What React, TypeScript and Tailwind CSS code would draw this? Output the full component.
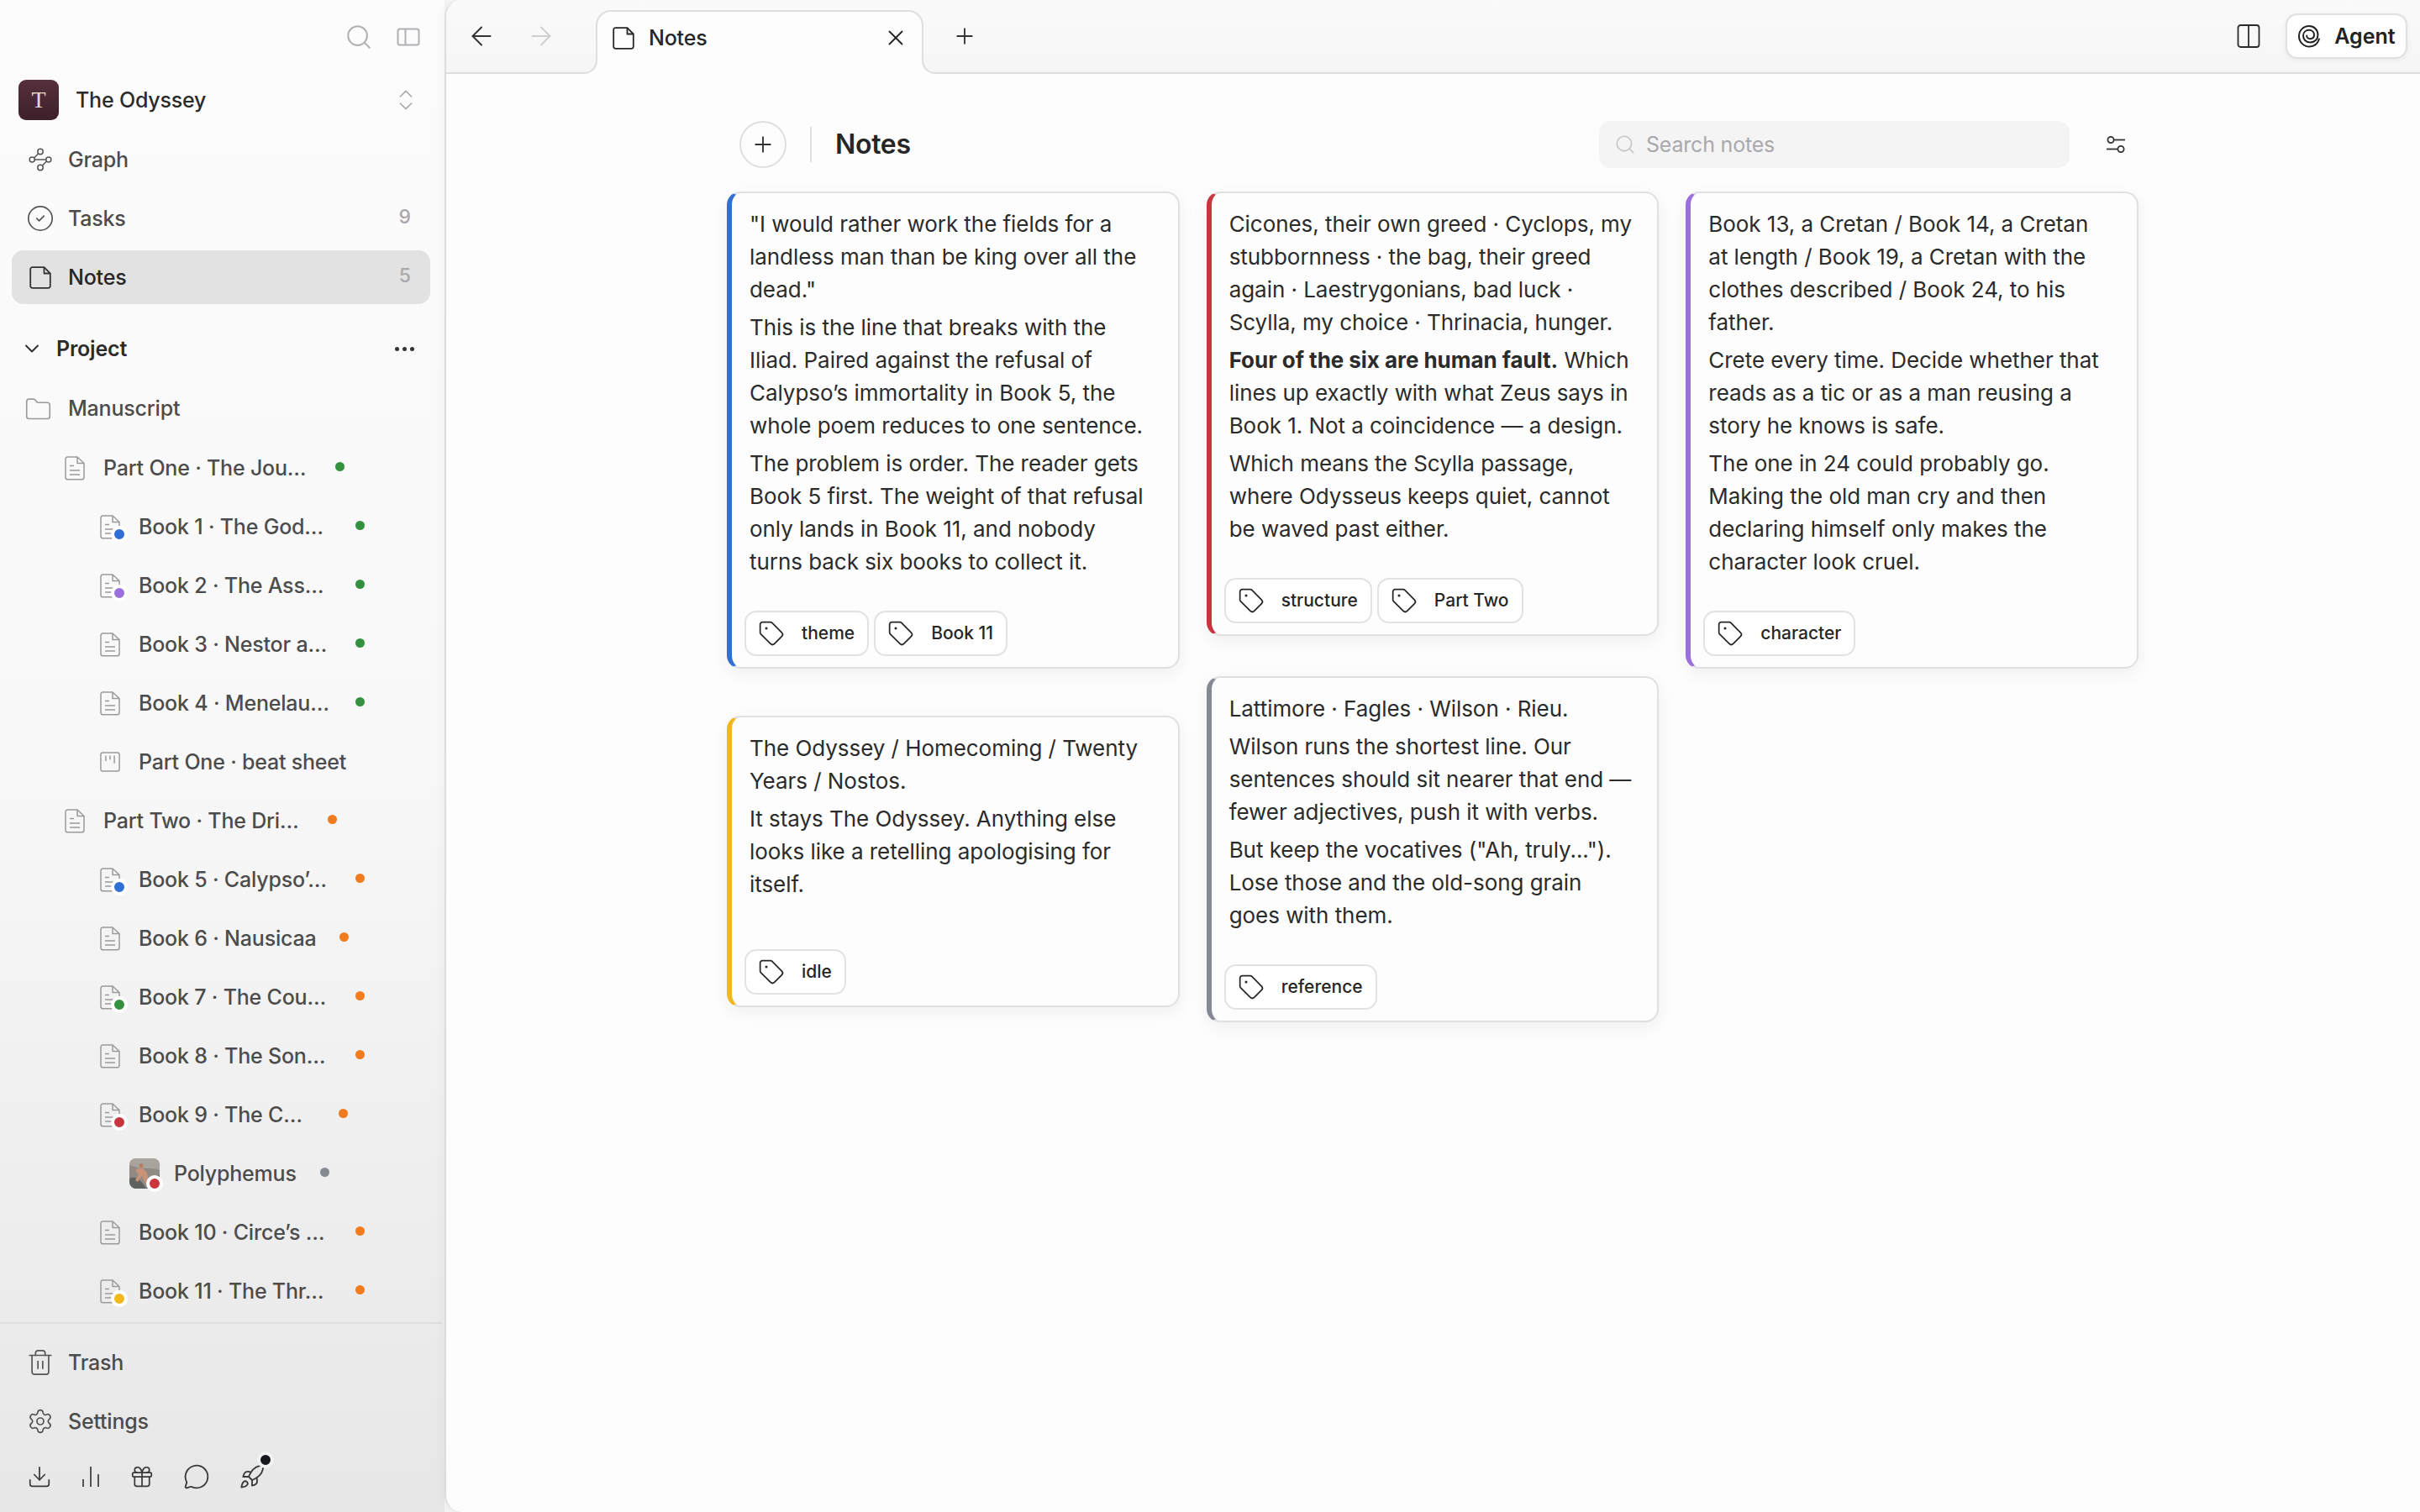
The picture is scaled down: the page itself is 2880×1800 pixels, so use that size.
import {
  ArrowLeft,
  ArrowRight,
  ChevronDown,
  ChevronsUpDown,
  CircleCheck,
  Download,
  Folder,
  Gift,
  MessageCircle,
  Plus,
  Rocket,
  Search,
  Settings,
  Tag as TagIcon,
  Trash2,
  X,
} from "lucide-react";

type TreeItem = {
  label: string;
  level: 1 | 2 | 3;
  width: string;
  dot?: string;
  badge?: string;
  kind?: "sheet" | "picture";
};

const tree: TreeItem[] = [
  { label: "Part One · The Jou…", level: 1, width: "w-[276px]", dot: "bg-[#33913f]" },
  { label: "Book 1 · The God…", level: 2, width: "w-[258px]", dot: "bg-[#33913f]", badge: "bg-[#2f6fd6]" },
  { label: "Book 2 · The Ass…", level: 2, width: "w-[258px]", dot: "bg-[#33913f]", badge: "bg-[#9b6fdc]" },
  { label: "Book 3 · Nestor a…", level: 2, width: "w-[258px]", dot: "bg-[#33913f]" },
  { label: "Book 4 · Menelau…", level: 2, width: "w-[258px]", dot: "bg-[#33913f]" },
  { label: "Part One · beat sheet", level: 2, width: "w-[258px]", kind: "sheet" },
  { label: "Part Two · The Dri…", level: 1, width: "w-[267px]", dot: "bg-[#f07c1f]" },
  { label: "Book 5 · Calypso’…", level: 2, width: "w-[258px]", dot: "bg-[#f07c1f]", badge: "bg-[#2f6fd6]" },
  { label: "Book 6 · Nausicaa", level: 2, width: "w-[239px]", dot: "bg-[#f07c1f]" },
  { label: "Book 7 · The Cou…", level: 2, width: "w-[258px]", dot: "bg-[#f07c1f]", badge: "bg-[#33913f]" },
  { label: "Book 8 · The Son…", level: 2, width: "w-[258px]", dot: "bg-[#f07c1f]" },
  { label: "Book 9 · The C…", level: 2, width: "w-[238px]", dot: "bg-[#f07c1f]", badge: "bg-[#c9353f]" },
  { label: "Polyphemus", level: 3, width: "w-[174px]", dot: "bg-[#858992]", badge: "bg-[#c9353f]", kind: "picture" },
  { label: "Book 10 · Circe’s …", level: 2, width: "w-[258px]", dot: "bg-[#f07c1f]" },
  { label: "Book 11 · The Thr…", level: 2, width: "w-[258px]", dot: "bg-[#f07c1f]", badge: "bg-[#f2b71b]" },
];

type Note = {
  accent: string;
  paragraphs: React.ReactNode[];
  tags: string[];
  tagGap?: string;
};

const columns: { gap: string; notes: Note[] }[] = [
  {
    gap: "gap-[56px]",
    notes: [
      {
        accent: "border-l-[#2f6fd6]",
        paragraphs: [
          `"I would rather work the fields for a landless man than be king over all the dead."`,
          "This is the line that breaks with the Iliad. Paired against the refusal of Calypso’s immortality in Book 5, the whole poem reduces to one sentence.",
          "The problem is order. The reader gets Book 5 first. The weight of that refusal only lands in Book 11, and nobody turns back six books to collect it.",
        ],
        tags: ["theme", "Book 11"],
      },
      {
        accent: "border-l-[#f2b71b]",
        paragraphs: [
          "The Odyssey / Homecoming / Twenty Years / Nostos.",
          "It stays The Odyssey. Anything else looks like a retelling apologising for itself.",
        ],
        tags: ["idle"],
        tagGap: "mt-[58px]",
      },
    ],
  },
  {
    gap: "gap-[48px]",
    notes: [
      {
        accent: "border-l-[#c9353f]",
        paragraphs: [
          "Cicones, their own greed · Cyclops, my stubbornness · the bag, their greed again · Laestrygonians, bad luck · Scylla, my choice · Thrinacia, hunger.",
          <>
            <strong className="font-bold">Four of the six are human fault.</strong> Which lines up exactly with what Zeus
            says in Book 1. Not a coincidence — a design.
          </>,
          "Which means the Scylla passage, where Odysseus keeps quiet, cannot be waved past either.",
        ],
        tags: ["structure", "Part Two"],
      },
      {
        accent: "border-l-[#858992]",
        paragraphs: [
          "Lattimore · Fagles · Wilson · Rieu.",
          "Wilson runs the shortest line. Our sentences should sit nearer that end — fewer adjectives, push it with verbs.",
          `But keep the vocatives ("Ah, truly..."). Lose those and the old-song grain goes with them.`,
        ],
        tags: ["reference"],
      },
    ],
  },
  {
    gap: "gap-[48px]",
    notes: [
      {
        accent: "border-l-[#9b6fdc]",
        paragraphs: [
          "Book 13, a Cretan / Book 14, a Cretan at length / Book 19, a Cretan with the clothes described / Book 24, to his father.",
          "Crete every time. Decide whether that reads as a tic or as a man reusing a story he knows is safe.",
          "The one in 24 could probably go. Making the old man cry and then declaring himself only makes the character look cruel.",
        ],
        tags: ["character"],
      },
    ],
  },
];

const PageIcon = () => (
  <svg viewBox="0 0 26 27" className="w-[26px] h-[27px] shrink-0" fill="none" stroke="currentColor" strokeWidth="1.8" strokeLinejoin="round">
    <path d="M4 1.2h13.5L24.8 8.5V23.5a2.3 2.3 0 0 1-2.3 2.3H3.5a2.3 2.3 0 0 1-2.3-2.3V3.5A2.3 2.3 0 0 1 3.5 1.2z" />
    <path d="M17.5 1.2v7.3h7.3" />
  </svg>
);

const DocIcon = () => (
  <svg viewBox="0 0 24 29" className="w-[24px] h-[29px] shrink-0" fill="none" stroke="currentColor" strokeWidth="1.5" strokeLinejoin="round">
    <path d="M3.5 1h11.5L23 8.5V25.5a2.3 2.3 0 0 1-2.3 2.3H3.3A2.3 2.3 0 0 1 1 25.5V3.3A2.3 2.3 0 0 1 3.3 1z" />
    <path d="M15 1v7.5h8M6 11.5h5M6 17h12M6 22h12" />
  </svg>
);

const GraphIcon = () => (
  <svg viewBox="0 0 28 28" className="w-[28px] h-[28px]" fill="none" stroke="currentColor" strokeWidth="1.5">
    <circle cx="14" cy="4.5" r="3.2" />
    <circle cx="4.2" cy="14" r="3" />
    <circle cx="23.8" cy="14" r="3" />
    <circle cx="14" cy="23.5" r="3.2" />
    <path d="M11.8 6.8 6.6 12M7.2 14h13.6M16.2 21.2 21.4 16" />
  </svg>
);

const PanelIcon = () => (
  <svg viewBox="0 0 28 22" className="w-[28px] h-[22px]" fill="none" stroke="currentColor" strokeWidth="2">
    <rect x="1.5" y="1.5" width="25" height="19" rx="2.5" />
    <path d="M10.5 1.5v19" />
  </svg>
);

const SplitIcon = () => (
  <svg viewBox="0 0 28 28" className="w-[28px] h-[28px]" fill="none" stroke="currentColor" strokeWidth="1.8">
    <rect x="1.5" y="1" width="25" height="26" rx="3" />
    <path d="M14 1v26" />
  </svg>
);

const SheetIcon = () => (
  <svg viewBox="0 0 26 26" className="w-[26px] h-[26px]" fill="none" stroke="currentColor" strokeWidth="1.6">
    <rect x="1" y="1" width="24" height="24" rx="2.5" />
    <path d="M7.5 5v7M13 5v5M18.5 5v10" />
  </svg>
);

const BarsIcon = () => (
  <svg viewBox="0 0 24 28" className="w-[24px] h-[28px]" fill="none" stroke="currentColor" strokeWidth="1.7">
    <path d="M3 26v-9M12 26V2M21 26V11" />
  </svg>
);

const FilterIcon = () => (
  <svg viewBox="0 0 26 26" className="w-[26px] h-[26px]" fill="none" stroke="currentColor" strokeWidth="1.8">
    <circle cx="7" cy="7.5" r="3.6" />
    <path d="M10.6 7.5H24" />
    <circle cx="19" cy="18.5" r="3.6" />
    <path d="M2 18.5h13.4" />
  </svg>
);

const SpiralIcon = () => (
  <svg viewBox="0 0 28 28" className="w-[28px] h-[28px]" fill="none" stroke="currentColor" strokeWidth="2" strokeLinecap="round">
    <path d="M26 17.5C24 23.5 19.5 26.5 14.5 26.5C7.5 26.5 2 21 2 14C2 7 7.5 2 14 2C20 2 24.5 6.5 24.5 12.5C24.5 18 20.5 21.5 15.5 21.5C10.5 21.5 7 18 7 13.5C7 9.5 10 6.8 14 6.8C17.5 6.8 20 9.3 20 12.5C20 15.5 17.8 17.2 15 17.2C12.8 17.2 11.2 15.6 11.2 13.6" />
  </svg>
);

const Painting = () => (
  <svg viewBox="0 0 36 36" className="w-[36px] h-[36px] rounded-[8px]">
    <rect width="36" height="36" fill="#8f8a84" />
    <path d="M0 0h36v14C26 10 14 14 0 8z" fill="#a8a39c" />
    <path d="M0 24C8 20 14 26 20 36H0z" fill="#5f6360" />
    <path d="M20 36C24 26 30 20 36 20v16z" fill="#6f6d68" />
    <path d="M7 14l5-3 4 1 5 5 2 11-4 2-4-9-5 7-3-2 4-7z" fill="#c99278" />
    <circle cx="14" cy="8.5" r="2.6" fill="#b57f66" />
  </svg>
);

function SideRow({ icon, label, count, active }: { icon: React.ReactNode; label: string; count?: number; active?: boolean }) {
  return (
    <div
      className={`h-[64px] ml-[14px] mr-[17px] pl-[20px] pr-[23px] flex items-center rounded-[14px] ${
        active ? "bg-[#e2e2e2] text-[#262626]" : "text-[#4c4c4c]"
      }`}
    >
      <span className="w-[28px] flex justify-center mr-[19px] text-[#555]">{icon}</span>
      <span className="flex-1 mt-[2px] text-[25px] tracking-[-0.2px] font-medium">{label}</span>
      {count !== undefined && <span className="text-[23px] font-medium text-[#a9a9ab] -mt-[4px]">{count}</span>}
    </div>
  );
}

function TreeRow({ item }: { item: TreeItem }) {
  const indent = item.level === 1 ? "pl-[77px]" : item.level === 2 ? "pl-[119px]" : "pl-[154px]";
  return (
    <div className={`h-[70px] flex items-center ${indent} text-[#4c4c4c]`}>
      <span className={`relative flex justify-center shrink-0 text-[#9a9a9a] ${item.kind === "picture" ? "w-[36px] mr-[17px]" : "w-[24px] mr-[22px]"}`}>
        {item.kind === "picture" ? <Painting /> : item.kind === "sheet" ? <SheetIcon /> : <DocIcon />}
        {item.badge && (
          <span
            className={`absolute w-[12px] h-[12px] box-content border-[4px] border-white rounded-full ${item.badge} ${
              item.kind === "picture" ? "-right-[4px] -bottom-[4px]" : "-right-[9px] -bottom-[4px]"
            }`}
          />
        )}
      </span>
      <span className={`${item.width} shrink-0 mt-[1px] text-[25px] tracking-[-0.2px] font-medium whitespace-nowrap`}>{item.label}</span>
      {item.dot && <span className={`w-[11px] h-[11px] rounded-full -mt-[4px] ${item.dot}`} />}
    </div>
  );
}

function NoteTag({ label }: { label: string }) {
  return (
    <div className="h-[54px] pl-[14px] pr-[15px] flex items-center gap-[20px] bg-white border-2 border-[#e2e2e6] rounded-[14px] text-[#262626]">
      <TagIcon className="w-[32px] h-[32px]" strokeWidth={1.3} />
      <span className="text-[21px] font-medium">{label}</span>
    </div>
  );
}

function NoteCard({ note }: { note: Note }) {
  return (
    <div className={`bg-[#fdfdfd] border-2 border-[#e0e0e4] border-l-[6px] ${note.accent} rounded-[16px] shadow-[0_6px_20px_rgba(0,0,0,0.06)] pt-[17px] pb-[13px] pl-[15px] pr-[16px]`}>
      <div className="pl-[6px] pr-[13px] flex flex-col gap-[6px] text-[26px] leading-[39px] tracking-[-0.05px] text-[#2b2b2b]">
        {note.paragraphs.map((text, i) => (
          <p key={i}>{text}</p>
        ))}
      </div>
      <div className={`flex gap-[6px] ${note.tagGap ?? "mt-[39px]"}`}>
        {note.tags.map((tag) => (
          <NoteTag key={tag} label={tag} />
        ))}
      </div>
    </div>
  );
}

export default function App() {
  return (
    <div className="h-[1800px] w-[2880px] flex overflow-hidden bg-[#f4f4f4] font-['Inter',sans-serif]">
      <aside className="w-[529px] shrink-0 h-full flex flex-col bg-gradient-to-b from-[#fcfcfc] via-[#f8f8f8] to-[#e7e7e7]">
        <div className="h-[88px] flex items-center justify-end gap-[28px] pr-[29px] text-[#b0b0b4]">
          <Search className="w-[34px] h-[34px]" strokeWidth={1.4} />
          <PanelIcon />
        </div>
        <div className="h-[62px] pl-[22px] pr-[30px] flex items-center">
          <div className="w-[48px] h-[48px] rounded-[9px] bg-gradient-to-b from-[#56303c] to-[#3d2029] flex items-center justify-center text-[#ecd9cf] font-['Liberation_Serif',serif] text-[28px]">
            T
          </div>
          <span className="flex-1 ml-[20px] mt-[2px] text-[25px] tracking-[-0.2px] font-medium text-[#2b2b2b]">The Odyssey</span>
          <ChevronsUpDown className="w-[32px] h-[32px] text-[#a9a9ab]" strokeWidth={1.2} />
        </div>
        <div className="mt-[8px] flex flex-col gap-[6px]">
          <SideRow icon={<GraphIcon />} label="Graph" />
          <SideRow icon={<CircleCheck className="w-[34px] h-[34px] shrink-0" strokeWidth={1.2} />} label="Tasks" count={9} />
          <SideRow icon={<span className="text-[#333]"><PageIcon /></span>} label="Notes" count={5} active />
        </div>
        <div className="mt-[18px] h-[70px] pl-[24px] pr-[36px] flex items-center text-[#2b2b2b]">
          <ChevronDown className="w-[28px] h-[28px] mr-[15px]" strokeWidth={1.6} />
          <span className="flex-1 mt-[2px] text-[25px] tracking-[-0.2px] font-semibold">Project</span>
          <span className="flex gap-[4px]">
            <span className="w-[5px] h-[5px] rounded-full bg-[#333]" />
            <span className="w-[5px] h-[5px] rounded-full bg-[#333]" />
            <span className="w-[5px] h-[5px] rounded-full bg-[#333]" />
          </span>
        </div>
        <div className="mt-[2px] h-[70px] pl-[29px] flex items-center text-[#4c4c4c]">
          <Folder className="w-[33px] h-[33px] mr-[19px] text-[#9a9a9a]" strokeWidth={1.2} />
          <span className="text-[25px] tracking-[-0.2px] font-medium">Manuscript</span>
        </div>
        <div className="flex-1 overflow-hidden">
          {tree.map((item) => (
            <TreeRow key={item.label} item={item} />
          ))}
        </div>
        <div className="border-t-2 border-[#dedee0] mr-[4px] pt-[14px] h-[226px]">
          <div className="flex flex-col gap-[6px]">
            <SideRow icon={<Trash2 className="w-[34px] h-[34px] shrink-0" strokeWidth={1.2} />} label="Trash" />
            <SideRow icon={<Settings className="w-[32px] h-[32px] shrink-0" strokeWidth={1.3} />} label="Settings" />
          </div>
          <div className="mt-[18px] pl-[32px] flex items-center gap-[34px] text-[#3a3a3a]">
            <Download className="w-[30px] h-[30px]" strokeWidth={1.4} />
            <BarsIcon />
            <Gift className="w-[30px] h-[30px]" strokeWidth={1.4} />
            <MessageCircle className="w-[32px] h-[32px]" strokeWidth={1.4} />
            <span className="relative">
              <Rocket className="w-[32px] h-[32px]" strokeWidth={1.4} />
              <span className="absolute -right-[10px] -top-[14px] w-[12px] h-[12px] box-content border-[4px] border-[#f2f2f2] rounded-full bg-[#16181d]" />
            </span>
          </div>
        </div>
      </aside>

      <main className="flex-1 h-full flex flex-col bg-[#fdfdfd] border-l-2 border-[#dcdcdf] rounded-l-[20px] shadow-[-4px_0_12px_rgba(0,0,0,0.03)] overflow-hidden">
        <header className="h-[88px] shrink-0 flex items-center bg-gradient-to-b from-[#fafafa] to-[#f6f6f6] border-b-2 border-[#dedee2] pl-[24px] pr-[15px]">
          <ArrowLeft className="w-[36px] h-[36px] text-[#333]" strokeWidth={1.3} />
          <ArrowRight className="w-[36px] h-[36px] ml-[35px] text-[#cfcfcf]" strokeWidth={1.3} />
          <div className="relative self-end -mb-[2px] ml-[47px] h-[76px] w-[390px] flex items-start pt-[16px] pl-[18px] pr-[16px] bg-[#fdfdfd] border-2 border-b-0 border-[#dedee2] rounded-t-[18px] text-[#262626]">
            <span className="absolute -left-[20px] bottom-0 w-[20px] h-[20px] bg-[#fdfdfd]">
              <span className="block w-full h-full bg-[#f6f6f6] border-r-2 border-b-2 border-[#dedee2] rounded-br-[16px]" />
            </span>
            <span className="absolute -right-[20px] bottom-0 w-[20px] h-[20px] bg-[#fdfdfd]">
              <span className="block w-full h-full bg-[#f6f6f6] border-l-2 border-b-2 border-[#dedee2] rounded-bl-[16px]" />
            </span>
            <span className="mt-[2px] mr-[17px]">
              <PageIcon />
            </span>
            <span className="flex-1 text-[25px] tracking-[-0.2px] font-medium leading-[30px]">Notes</span>
            <X className="w-[30px] h-[30px]" strokeWidth={1.5} />
          </div>
          <Plus className="w-[30px] h-[30px] ml-[34px] text-[#333]" strokeWidth={1.5} />
          <div className="flex-1" />
          <span className="text-[#2b2b2b] mr-[30px]">
            <SplitIcon />
          </span>
          <div className="h-[54px] w-[145px] flex items-center justify-center gap-[16px] bg-white border-2 border-[#e0e0e4] rounded-[14px] shadow-[0_2px_6px_rgba(0,0,0,0.06)] text-[#222]">
            <SpiralIcon />
            <span className="mt-[2px] text-[25px] font-semibold">Agent</span>
          </div>
        </header>

        <div className="flex-1 pl-[334px]">
          <div className="w-[1681px]">
            <div className="h-[140px] pt-[56px] pl-[15px] pr-[15px] flex items-start">
              <div className="w-[56px] h-[56px] rounded-full border-2 border-[#dfdfe3] flex items-center justify-center text-[#333]">
                <Plus className="w-[30px] h-[30px]" strokeWidth={1.5} />
              </div>
              <div className="w-[2px] h-[42px] mt-[7px] mx-[28px] bg-[#e0e0e0]" />
              <span className="flex-1 text-[32px] tracking-[-0.3px] font-semibold leading-[56px] text-[#262626]">Notes</span>
              <div className="w-[560px] h-[56px] flex items-center bg-[#f4f4f5] rounded-[14px] pl-[18px] text-[#a9a9ad]">
                <Search className="w-[26px] h-[26px] text-[#c4c4c8] mr-[12px]" strokeWidth={1.5} />
                <span className="mt-[2px] text-[25px] tracking-[-0.2px]">Search notes</span>
              </div>
              <span className="mt-[15px] ml-[42px] text-[#333]">
                <FilterIcon />
              </span>
            </div>
            <div className="grid grid-cols-3 gap-[32px] items-start w-[1680px]">
              {columns.map((col, i) => (
                <div key={i} className={`flex flex-col ${col.gap}`}>
                  {col.notes.map((note, j) => (
                    <NoteCard key={j} note={note} />
                  ))}
                </div>
              ))}
            </div>
          </div>
        </div>
      </main>
    </div>
  );
}
